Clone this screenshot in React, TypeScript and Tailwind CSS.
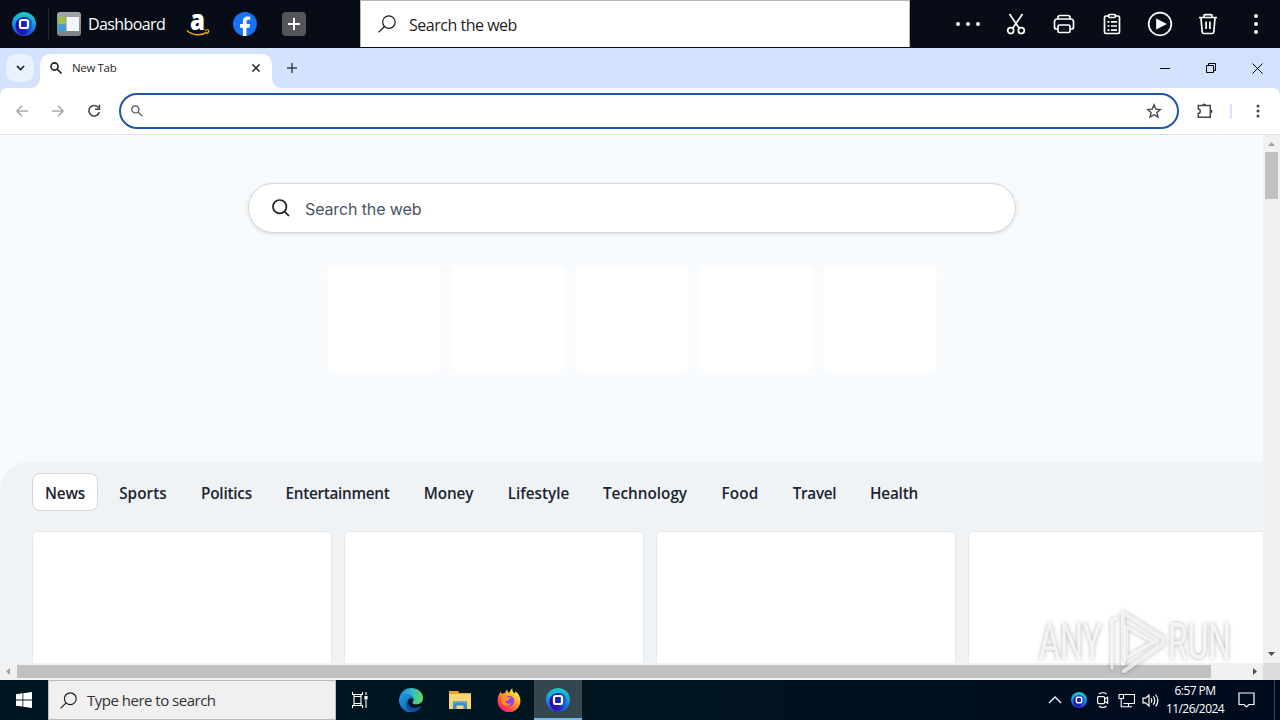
import type { ReactNode } from 'react';
import clsx from 'clsx';

const SEGOE = "font-['Open_Sans','Noto_Sans',sans-serif]";

const CATEGORIES = [
  { label: 'News', width: 'w-[66px]', tracking: 'tracking-[-0.2px]' },
  { label: 'Sports', width: 'w-[74px]', tracking: 'tracking-[0.05px]' },
  { label: 'Politics', width: 'w-[77px]', tracking: 'tracking-[-0.2px]' },
  { label: 'Entertainment', width: 'w-[129px]', tracking: 'tracking-[-0.3px]' },
  { label: 'Money', width: 'w-[77px]', tracking: 'tracking-[-0.1px]' },
  { label: 'Lifestyle', width: 'w-[87px]', tracking: 'tracking-[0px]' },
  { label: 'Technology', width: 'w-[110px]', tracking: 'tracking-[0px]' },
  { label: 'Food', width: 'w-[64px]', tracking: 'tracking-[0.2px]' },
  { label: 'Travel', width: 'w-[69px]', tracking: 'tracking-[-0.3px]' },
  { label: 'Health', width: 'w-[74px]', tracking: 'tracking-[-0.2px]' },
];

export default function App() {
  return (
    <div className={clsx('relative flex h-[720px] w-[1280px] flex-col overflow-hidden bg-white', SEGOE)}>
      <LauncherBar />
      <TabStrip />
      <AddressBar />
      <div className="flex min-h-0 flex-1">
        <div className="flex w-[1263px] flex-col">
          <NewTabPage />
          <HorizontalScrollbar />
        </div>
        <VerticalScrollbar />
      </div>
      <Taskbar />
      <Watermark />
    </div>
  );
}

/* ---------- top launcher ---------- */

function LauncherBar() {
  return (
    <header className="flex h-12 shrink-0 bg-[#080c16]">
      <div className="flex w-[360px] items-center">
        <OneLogo id="top" className="ml-3 size-6" />
        <span className="ml-3 h-8 w-px bg-[#20242d]" />
        <DashboardIcon />
        <span className="ml-[7px] w-[78px] whitespace-nowrap text-[16px] leading-6 tracking-[-0.6px] text-white">
          Dashboard
        </span>
        <AmazonLogo />
        <FacebookLogo />
        <span className="ml-[25px] flex size-6 items-center justify-center rounded-[4px] bg-[#54565c]">
          <svg viewBox="0 0 12 12" className="size-3">
            <path d="M6 0v12M0 6h12" stroke="#fff" strokeWidth="2" />
          </svg>
        </span>
      </div>
      <div className="flex h-[47px] w-[550px] items-center border border-b-0 border-[#b5b5b5] bg-white">
        <SearchGlyph className="ml-[17px] size-[18px]" />
        <span className="ml-[13px] mt-[2px] text-[16px] tracking-[-0.48px] text-[#1c1c1c]">Search the web</span>
      </div>
      <div className="flex flex-1 items-center justify-end text-white">
        <LauncherButton>
          <g fill="currentColor" stroke="none">
            <circle cx="4" cy="14" r="2" />
            <circle cx="14" cy="14" r="2" />
            <circle cx="24" cy="14" r="2" />
          </g>
        </LauncherButton>
        <LauncherButton>
          <path d="M7.500 4l9.600 14M20.500 4l-9.600 14" />
          <circle cx="8.700" cy="20.600" r="3" />
          <circle cx="19.300" cy="20.600" r="3" />
        </LauncherButton>
        <LauncherButton>
          <path d="M8 9V7.500A2 2 0 0 1 10 5.500h8a2 2 0 0 1 2 2V9M8 19H6.500a2 2 0 0 1-2-2v-5.500A2.500 2.500 0 0 1 7 9h14a2.500 2.500 0 0 1 2.500 2.500V17a2 2 0 0 1-2 2H20" />
          <rect x="8" y="15" width="12" height="7.500" rx="1.500" />
        </LauncherButton>
        <LauncherButton>
          <path d="M10.500 6H8a1.500 1.500 0 0 0-1.500 1.500V22A1.500 1.500 0 0 0 8 23.500h12a1.500 1.500 0 0 0 1.500-1.500V7.500A1.500 1.500 0 0 0 20 6h-2.500" />
          <rect x="10.500" y="4.500" width="7" height="3" rx="1.300" />
          <path d="M9.500 11.800h2M13 11.800h6M9.500 16h2M13 16h6M9.500 20.200h2M13 20.200h6" />
        </LauncherButton>
        <LauncherButton>
          <circle cx="14" cy="14" r="11.300" />
          <path d="M11 10v8l8-4z" fill="currentColor" />
        </LauncherButton>
        <LauncherButton>
          <path d="M5 7.500h18M10 7V6a1.300 1.300 0 0 1 1.300-1.300h5.400A1.300 1.300 0 0 1 18 6v1M7 8l1.200 14a1.700 1.700 0 0 0 1.700 1.500h8.200a1.700 1.700 0 0 0 1.700-1.500L21 8M12.100 11.500V19M15.900 11.500V19" />
        </LauncherButton>
        <LauncherButton>
          <g fill="currentColor" stroke="none">
            <circle cx="14" cy="6" r="2" />
            <circle cx="14" cy="14" r="2" />
            <circle cx="14" cy="22" r="2" />
          </g>
        </LauncherButton>
      </div>
    </header>
  );
}

function LauncherButton({ children }: { children: ReactNode }) {
  return (
    <button className="flex w-12 items-center justify-center">
      <svg viewBox="0 0 28 28" className="size-7" fill="none" stroke="currentColor" strokeWidth="1.7">
        {children}
      </svg>
    </button>
  );
}

function OneLogo({ id, className }: { id: string; className?: string }) {
  return (
    <svg viewBox="0 0 24 24" className={className}>
      <defs>
        <linearGradient id={`${id}-outer`} x1="0.6" y1="0" x2="0.5" y2="1">
          <stop offset="0" stopColor="#1fc9c6" />
          <stop offset="0.4" stopColor="#17a5dc" />
          <stop offset="0.8" stopColor="#1a62e8" />
          <stop offset="1" stopColor="#3a35c8" />
        </linearGradient>
        <linearGradient id={`${id}-inner`} x1="0.1" y1="0.5" x2="1" y2="0.5">
          <stop offset="0" stopColor="#2a10a4" />
          <stop offset="0.5" stopColor="#1d1fb4" />
          <stop offset="1" stopColor="#1470dd" />
        </linearGradient>
      </defs>
      <circle cx="12" cy="12" r="12" fill={`url(#${id}-outer)`} />
      <path d="M3.500 13.500C3.500 8.500 7.500 5 12.500 5c4.500 0 8 3 8 7.500 0 5.500-3.500 10-9 10.800-4.500-.8-8-4.800-8-9.800z" fill={`url(#${id}-inner)`} />
      <rect x="8" y="8" width="8" height="8" rx="1.800" fill="none" stroke="#fff" strokeWidth="2.200" />
    </svg>
  );
}

function DashboardIcon() {
  return (
    <svg viewBox="0 0 24 24" className="ml-2 size-6">
      <defs>
        <linearGradient id="dash-bg" x1="0" y1="0" x2="0" y2="1">
          <stop offset="0" stopColor="#a5a8aa" />
          <stop offset="1" stopColor="#7c8083" />
        </linearGradient>
      </defs>
      <rect width="24" height="24" rx="3" fill="url(#dash-bg)" />
      <rect x="1.500" y="5" width="7" height="7" fill="#9fbf45" />
      <rect x="1.500" y="12" width="7" height="7" fill="#3c9fdc" />
      <rect x="9.500" y="5" width="12.500" height="14" fill="#f3f6f8" />
    </svg>
  );
}

function AmazonLogo() {
  return (
    <svg viewBox="0 0 24 26" className="ml-5 h-[26px] w-6 overflow-visible">
      <text
        x="11.5"
        y="19"
        textAnchor="middle"
        textLength="15"
        lengthAdjust="spacingAndGlyphs"
        fontSize="29"
        fontWeight="800"
        fontFamily="Open Sans"
        fill="#fff"
      >
        a
      </text>
      <path d="M.8 19.500c6 5.200 14.500 5.600 20.500 1.700" fill="none" stroke="#f7a31c" strokeWidth="1.600" />
      <path d="M18.300 19.300c2-.6 4-.6 4.300-.1.300.7-.3 2.600-1.600 4" fill="none" stroke="#f7a31c" strokeWidth="1.200" />
    </svg>
  );
}

function FacebookLogo() {
  return (
    <svg viewBox="0 0 24 24" className="ml-[23px] size-6">
      <circle cx="12" cy="12" r="12" fill="#1673f5" />
      <path
        d="M9.900 23.800v-8.100H7v-3.600h2.900V9.900c0-3.900 1.900-5.500 5-5.500.9 0 1.700.1 2.300.3v3.100c-.5-.1-1.100-.1-1.600-.1-1.600 0-2.100.7-2.100 2.200v2.200h3.500l-.6 3.600h-2.900v8.200c-1.200.2-2.400.2-3.600-.1z"
        fill="#fff"
      />
    </svg>
  );
}

function SearchGlyph({ className }: { className?: string }) {
  return (
    <svg viewBox="0 0 19 19" className={className} fill="none" stroke="#1c1c1c" strokeWidth="1.3">
      <circle cx="11.500" cy="7.500" r="6.600" />
      <path d="M6.800 12.200L.6 18.400" />
    </svg>
  );
}

/* ---------- browser chrome ---------- */

function TabStrip() {
  return (
    <div className="flex h-10 shrink-0 items-end bg-[#d3e3fd]">
      <button className="mb-1.5 ml-1.5 flex size-7 items-center justify-center rounded-[10px] bg-[#e9f1fe]">
        <svg viewBox="0 0 10 6" className="h-1.5 w-[9px]" fill="none" stroke="#1f1f1f" strokeWidth="1.9">
          <path d="M1 .8l4 4 4-4" />
        </svg>
      </button>
      <svg viewBox="0 0 10 10" className="-ml-1 size-2.5 shrink-0">
        <path d="M10 0v10H0c6 0 10-4 10-10z" fill="#fff" />
      </svg>
      <div className="flex h-[34px] w-[232px] items-center rounded-t-[10px] bg-white">
        <svg viewBox="0 0 12 12" className="mb-1.5 ml-2.5 size-3" fill="none" stroke="#1f1f1f" strokeWidth="1.6">
          <circle cx="4.500" cy="4.500" r="3.600" />
          <path d="M7.200 7.200l4.300 4.300" />
        </svg>
        <span className="mb-1.5 ml-2.5 flex-1 text-[11.5px] tracking-[-0.35px] text-[#1f1f1f]">New Tab</span>
        <svg viewBox="0 0 8 8" className="mb-1.5 mr-3 size-2" stroke="#1f1f1f" strokeWidth="1.4">
          <path d="M.4.4l7.200 7.200M7.600.4L.4 7.600" />
        </svg>
      </div>
      <svg viewBox="0 0 10 10" className="size-2.5">
        <path d="M0 0v10h10C4 10 0 6 0 0z" fill="#fff" />
      </svg>
      <svg viewBox="0 0 10 10" className="mb-[15px] ml-[5px] size-2.5" stroke="#41464e" strokeWidth="1.5">
        <path d="M5 0v10M0 5h10" />
      </svg>
      <div className="ml-auto flex h-10 items-center">
        <span className="flex w-[46px] justify-center">
          <span className="mt-px h-px w-2.5 bg-black" />
        </span>
        <span className="flex w-[46px] justify-center">
          <svg viewBox="0 0 10 10" className="size-2.5" fill="none" stroke="#000">
            <path d="M.5 2.500h7v7h-7zM2.500 2.500v-2h7v7h-2" />
          </svg>
        </span>
        <span className="flex w-[46px] justify-center">
          <svg viewBox="0 0 11 11" className="size-[11px]" fill="none" stroke="#000">
            <path d="M.5.5l10 10M10.500.5l-10 10" />
          </svg>
        </span>
      </div>
    </div>
  );
}

function AddressBar() {
  return (
    <div className="h-[47px] shrink-0 bg-[#d3e3fd]">
      <div className="flex h-[47px] items-center rounded-t-[8px] border-b border-[#e4e2e0] bg-white">
        <svg viewBox="0 0 12 12" className="ml-4 size-3" fill="none" stroke="#a9a9a9" strokeWidth="1.5">
          <path d="M12 6H1M6 .8L.9 6 6 11.200" />
        </svg>
        <svg viewBox="0 0 12 12" className="ml-6 size-3" fill="none" stroke="#a9a9a9" strokeWidth="1.5">
          <path d="M0 6h11M6 .8L11.100 6 6 11.200" />
        </svg>
        <svg viewBox="0 0 14 14" className="ml-[23px] size-3.5" fill="none" stroke="#474747" strokeWidth="1.6">
          <path d="M11.500 3.700A5.300 5.300 0 1 0 12.300 8" />
          <path d="M12.400.8v4.400H8" />
        </svg>
        <div className="ml-[18px] flex h-9 w-[1060px] items-center rounded-full border-2 border-[#1f55ab] bg-white">
          <svg viewBox="0 0 12 12" className="ml-2.5 size-3" fill="none" stroke="#4a4a4a" strokeWidth="1.2">
            <circle cx="4.400" cy="4.400" r="3.600" />
            <path d="M7.100 7.100l4.300 4.300" />
          </svg>
          <svg viewBox="0 0 16 16" className="ml-auto mr-[15px] size-4" fill="none" stroke="#41464e" strokeWidth="1.4">
            <path d="M8 1.800l1.800 4.300 4.600.4-3.500 3.100 1.100 4.500L8 11.700l-4 2.400 1.100-4.500-3.500-3.100 4.600-.4z" />
          </svg>
        </div>
        <svg viewBox="0 0 18 18" className="ml-[17px] size-[18px]" fill="none" stroke="#474747" strokeWidth="1.5">
          <path d="M2.300 3.500h12v11.800h-12v-3.900c2.600 0 2.600-4.300 0-4.300z" />
          <path d="M6.300 3.300a1.900 1.900 0 0 1 3.800 0zM14.600 7.400a1.900 1.900 0 0 1 0 3.800z" fill="#474747" stroke="none" />
        </svg>
        <span className="ml-4 h-[15px] w-[2px] bg-[#dbe3fb]" />
        <svg viewBox="0 0 4 14" className="ml-6 h-3.5 w-1" fill="#474747">
          <circle cx="2" cy="2" r="1.500" />
          <circle cx="2" cy="7" r="1.500" />
          <circle cx="2" cy="12" r="1.500" />
        </svg>
      </div>
    </div>
  );
}

/* ---------- page ---------- */

function NewTabPage() {
  return (
    <main className="flex min-h-0 flex-1 flex-col overflow-hidden bg-[#f8fbfe]">
      <div className="ml-[248px] mt-12 flex h-[50px] w-[768px] shrink-0 items-center rounded-full border border-[#d4d6d8] bg-white shadow-[0_1px_4px_rgba(0,0,0,0.12)]">
        <svg viewBox="0 0 18 18" className="ml-[23px] size-[18px]" fill="none" stroke="#1c2024" strokeWidth="1.7">
          <circle cx="7.700" cy="7.700" r="6.700" />
          <path d="M12.600 12.600l4.400 4.400" />
        </svg>
        <span className="ml-[15px] mt-px font-['Inter','Liberation_Sans',sans-serif] text-[16px] tracking-[-0.12px] text-[#4b5563]">
          Search the web
        </span>
      </div>

      <div className="mt-[34px] flex shrink-0 justify-center gap-3">
        {[0, 1, 2, 3, 4].map((i) => (
          <div key={i} className="h-[105px] w-28 rounded-[6px] bg-white shadow-[0_0_6px_2px_#fafafa]" />
        ))}
      </div>

      <section className="mt-[90px] flex-1 overflow-hidden rounded-tl-[28px] bg-[#eff3f6] pl-8 pt-[11px]">
        <nav className="flex gap-2">
          {CATEGORIES.map((c, i) => (
            <button
              key={c.label}
              className={clsx(
                'flex h-[38px] shrink-0 items-center justify-center rounded-[8px] border pt-0.5 text-[15.3px] font-semibold text-[#1c2430]',
                c.width,
                c.tracking,
                i === 0 ? 'border-[#d4d7da] bg-white' : 'border-transparent'
              )}
            >
              {c.label}
            </button>
          ))}
        </nav>
        <div className="mt-5 flex gap-3">
          {[0, 1, 2, 3].map((i) => (
            <article key={i} className="h-[300px] w-[300px] shrink-0 rounded-[6px] border border-[#e6e9eb] bg-white" />
          ))}
        </div>
      </section>
    </main>
  );
}

function HorizontalScrollbar() {
  return (
    <div className="flex h-[17px] shrink-0 items-center bg-[#f1f1f1]">
      <svg viewBox="0 0 17 17" className="size-[17px]">
        <path d="M10 5v7L6 8.500z" fill="#a3a3a3" />
      </svg>
      <div className="h-[13px] w-[1194px] bg-[#c1c1c1]" />
      <svg viewBox="0 0 17 17" className="ml-auto size-[17px]">
        <path d="M7 5v7l4-3.500z" fill="#505050" />
      </svg>
    </div>
  );
}

function VerticalScrollbar() {
  return (
    <div className="flex w-[17px] flex-col items-center bg-[#f1f1f1]">
      <svg viewBox="0 0 17 17" className="size-[17px]">
        <path d="M5 11h7L8.500 7z" fill="#a3a3a3" />
      </svg>
      <div className="h-[47px] w-[13px] bg-[#c1c1c1]" />
      <svg viewBox="0 0 17 17" className="mt-auto size-[17px]">
        <path d="M5 6h7l-3.500 4z" fill="#505050" />
      </svg>
      <div className="size-[17px] bg-[#dcdcdc]" />
    </div>
  );
}

/* ---------- taskbar ---------- */

function Taskbar() {
  return (
    <footer className="flex h-10 shrink-0 items-center bg-gradient-to-r from-[#00151f] via-[#001520] to-[#000a1d]">
      <div className="flex w-12 justify-center">
        <svg viewBox="0 0 16 16" className="size-4" fill="#fff">
          <path d="M0 2.200L6.500 1.300v6.200H0zM7.300 1.200L16 0v7.500H7.300zM0 8.400h6.500v6.200L0 13.800zM7.300 8.400H16V16l-8.700-1.200z" />
        </svg>
      </div>
      <div className="flex h-10 w-[288px] items-center border border-[#bcbcbc] bg-[#f0f0f0]">
        <SearchGlyph className="ml-[11px] size-[17px]" />
        <span className="ml-[10px] whitespace-nowrap text-[15px] tracking-[-0.5px] text-[#303030]">Type here to search</span>
      </div>
      <div className="flex w-[48px] justify-center">
        <svg viewBox="0 0 16 16" className="size-4" fill="none" stroke="#fff" strokeWidth="1.1">
          <path d="M.5 0v2.500h10V0M2 2.500v11M9 2.500v11M.5 16v-2.500h10V16M14 0v3M14 8v8" />
          <path d="M2 4.500h7M2 11.500h7" />
          <rect x="13" y="4.500" width="2" height="2.500" fill="#fff" />
        </svg>
      </div>
      <div className="ml-[3px] flex w-12 justify-center">
        <EdgeIcon />
      </div>
      <div className="flex w-[50px] justify-center">
        <ExplorerIcon />
      </div>
      <div className="flex w-12 justify-center">
        <FirefoxIcon />
      </div>
      <div className="ml-px flex h-10 w-12 items-center justify-center border-b-2 border-[#76b9ed] bg-[#34474f] pt-0.5">
        <OneLogo id="task" className="size-6" />
      </div>

      <div className="ml-auto flex items-center">
        <svg viewBox="0 0 14 8" className="h-2 w-3.5" fill="none" stroke="#fff" strokeWidth="1.3">
          <path d="M1 7l6-6 6 6" />
        </svg>
        <OneLogo id="tray" className="ml-[9px] size-4" />
        <svg viewBox="0 0 14 16" className="ml-[9px] h-4 w-3.5" fill="none" stroke="#fff" strokeWidth="1.2">
          <rect x="1.600" y="4.600" width="7" height="7" rx="1" />
          <path d="M8.600 7l3-1.800v6L8.600 9.500M3 2c2-1.700 5.500-1.700 7.500 0M3 14.300c2 1.600 5.500 1.600 7.500 0" />
        </svg>
        <svg viewBox="0 0 17 15" className="ml-[8px] h-[15px] w-[17px]" fill="none" stroke="#fff" strokeWidth="1.1">
          <path d="M5.500 1.500h11v9h-11M1 1.500h4.500v4H1zM3.200 5.500v8.300h4M10.500 10.500v3M7 13.800h7" />
        </svg>
        <svg viewBox="0 0 17 15" className="ml-[7px] h-[15px] w-[17px]" fill="none" stroke="#fff" strokeWidth="1.2">
          <path d="M1 5.200h2.500L7 2v11L3.500 9.800H1zM9 5.300q1.600 2.200 0 4.400M11.300 3.400q3 4.100 0 8.200M13.600 1.500q4.600 6 0 12" />
        </svg>
        <div className="ml-[6px] flex w-[60px] flex-col items-center whitespace-nowrap text-[12px] leading-[18px] tracking-[-0.55px] text-white">
          <span>6:57 PM</span>
          <span>11/26/2024</span>
        </div>
        <svg viewBox="0 0 17 16" className="ml-[13px] h-4 w-[17px]" fill="none" stroke="#fff" strokeWidth="1.2">
          <path d="M1 1h15v11.500h-5L8.500 15 6 12.500H1z" />
        </svg>
        <span className="ml-[19px] mr-[5px] h-10 w-px bg-[#3f4857]" />
      </div>
    </footer>
  );
}

function EdgeIcon() {
  return (
    <svg viewBox="0 0 24 24" className="size-6">
      <defs>
        <linearGradient id="edge-top" x1="0" y1="0.3" x2="1" y2="0.4">
          <stop offset="0" stopColor="#1587dc" />
          <stop offset="0.5" stopColor="#35b9cb" />
          <stop offset="1" stopColor="#5fd85c" />
        </linearGradient>
        <linearGradient id="edge-low" x1="0" y1="0" x2="1" y2="1">
          <stop offset="0" stopColor="#1b9de2" />
          <stop offset="1" stopColor="#0d4fa0" />
        </linearGradient>
      </defs>
      <path d="M.2 11C1 4.500 6 0 12.200 0 19 0 24 4.500 24 10c0 4-3 6.300-6.500 6.300-3 0-4.600-1-4.100-1.900 2.600-2.700.6-6.400-3-6.400C6 8 1.700 11 .2 14z" fill="url(#edge-top)" />
      <path d="M0 12c.7-4 5-6.200 9-6 3.500.3 5.500 2.700 5.500 5.200-2.700-2.500-6.500 0-6.500 4.300 0 4.500 4 7 8.400 5.700 1.800-.5 3.500-1.600 4.900-2.700.6-.3 1 .1.700.6A12 12 0 0 1 0 12z" fill="url(#edge-low)" />
      <path d="M8.700 12.500c-1.800 2-2.200 5-.4 7.700 1.500 2.200 4 3.600 6.700 3.500A12 12 0 0 0 22 19.100c.3-.5-.1-.9-.7-.6-5 3-12.200 1.500-12.600-6z" fill="#10499b" />
    </svg>
  );
}

function ExplorerIcon() {
  return (
    <svg viewBox="0 0 22 18" className="h-[18px] w-[22px]">
      <path d="M0 0h9l1.500 2H22v16H0z" fill="#e9a32c" />
      <path d="M0 3h22v15H0z" fill="#f7d675" />
      <path d="M4 10.500h14V18h-3.500v-3.500h-7V18H4z" fill="#3a8fcd" />
      <path d="M4 10.500h14V12H4z" fill="#56a6dc" />
    </svg>
  );
}

function FirefoxIcon() {
  return (
    <svg viewBox="0 0 24 24" className="size-6">
      <defs>
        <linearGradient id="fox-body" x1="0.8" y1="0.1" x2="0.2" y2="0.9">
          <stop offset="0" stopColor="#fff04a" />
          <stop offset="0.45" stopColor="#ff9622" />
          <stop offset="0.8" stopColor="#ff4052" />
          <stop offset="1" stopColor="#e5236f" />
        </linearGradient>
      </defs>
      <path d="M15.500.3c-.5 2 .3 3.700 2 5 .7-.4.900-1.300.6-2 3.500 2 5.400 5.600 5.300 9.700A11.400 11.400 0 0 1 .6 13C.5 9 2 5.600 4 3.500c0 1.200.3 2 .9 2.600C6 5.300 7 4.900 8.200 5c.3-1.500 1-2.600 2-3.300.1 2 1 2.700 2.500 2.900C12.900 3 14 1.200 15.500.3z" fill="url(#fox-body)" />
      <circle cx="12" cy="13" r="5.300" fill="#8a45e8" />
      <path d="M4.500 8.500c2.500-2 5.500-1 6.500.8h3c-.3 1.300-2 1.500-2.300 2.500-.2 1.400-2 1.300-3.400 1.200.5 2.600 3.500 3.300 6 2-1 3.500-8 5-10-1z" fill="#ff8b24" />
    </svg>
  );
}

function Watermark() {
  return (
    <svg
      viewBox="0 0 220 72"
      className="pointer-events-none absolute left-[1036px] top-[606px] h-[72px] w-[220px] overflow-visible drop-shadow-[0_0_2px_rgba(0,0,0,0.4)]"
    >
      <g fill="#fff" fillOpacity="0.75" fontFamily="Roboto" fontSize="50">
        <text x="3" y="53" textLength="63" lengthAdjust="spacingAndGlyphs">ANY</text>
        <text x="132" y="53" textLength="63" lengthAdjust="spacingAndGlyphs">RUN</text>
      </g>
      <g fill="none" stroke="#fff" strokeOpacity="0.7" strokeLinejoin="round" strokeLinecap="round">
        <path d="M87 58V7l40 25v6L88 65" strokeWidth="4" />
        <path d="M76 62V15l4-3M89 20v34M91 21l26 15-27 16z" strokeWidth="3" />
      </g>
    </svg>
  );
}
